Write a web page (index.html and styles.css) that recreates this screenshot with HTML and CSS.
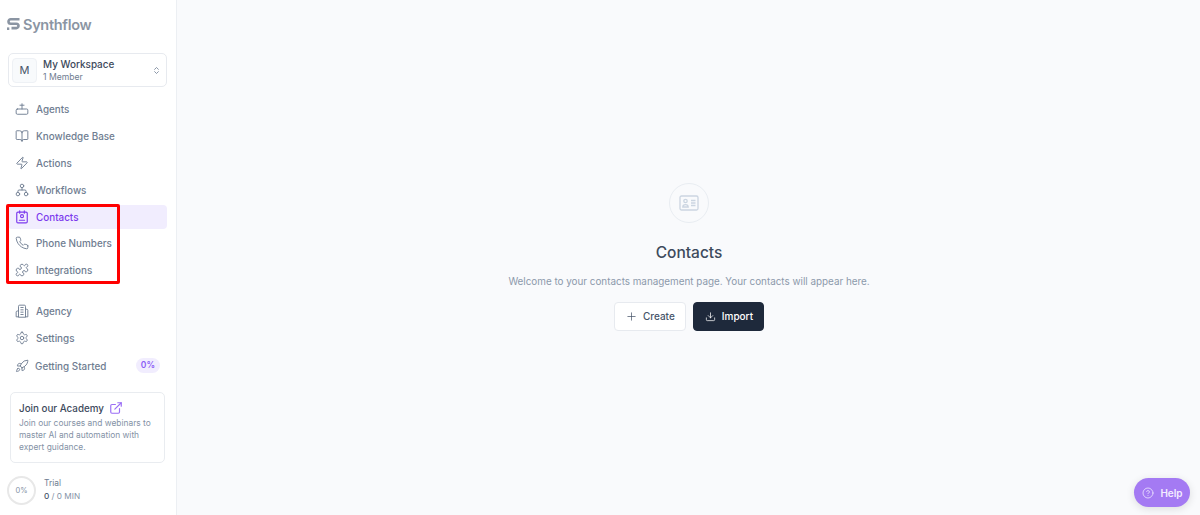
FILE: index.html
```html
<!DOCTYPE html>
<html lang="en">
<head>
    <meta charset="UTF-8">
    <title>Contacts - Synthflow</title>
    <link rel="stylesheet" href="styles.css">
</head>
<body>
    <div class="app">
        <aside class="sidebar">
            <div class="logo">
                <svg class="logo-mark" viewBox="0 0 13 12" fill="none" stroke="#8b95a3" stroke-width="2.600"><path d="M12.500 1.300H3.700a2.200 2.200 0 0 0 0 4.400h5.600a2.200 2.200 0 0 1 0 4.400H4.500"/><path d="M0 10.700h2.300"/></svg>
                <span>Synthflow</span>
            </div>

            <div class="workspace">
                <div class="ws-avatar">M</div>
                <div class="ws-text">
                    <div class="ws-name">My Workspace</div>
                    <div class="ws-sub">1 Member</div>
                </div>
                <svg class="ws-caret" viewBox="0 0 24 24" fill="none" stroke="#64748b" stroke-width="2" stroke-linecap="round" stroke-linejoin="round"><path d="m7 15 5 5 5-5"/><path d="m7 9 5-5 5 5"/></svg>
            </div>

            <nav class="nav">
                <a class="nav-item">
                    <svg class="icon" viewBox="0 0 24 24"><rect x="2" y="12" width="20" height="9" rx="2"/><path d="M12 12V3"/><path d="M8.500 5.500h7"/></svg>
                    Agents
                </a>
                <a class="nav-item">
                    <svg class="icon" viewBox="0 0 24 24"><path d="M12 7v14"/><path d="M3 18a1 1 0 0 1-1-1V4a1 1 0 0 1 1-1h5a4 4 0 0 1 4 4 4 4 0 0 1 4-4h5a1 1 0 0 1 1 1v13a1 1 0 0 1-1 1h-6a3 3 0 0 0-3 3 3 3 0 0 0-3-3z"/></svg>
                    Knowledge Base
                </a>
                <a class="nav-item">
                    <svg class="icon" viewBox="0 0 24 24"><path d="M4 14a1 1 0 0 1-.78-1.630l9.900-10.200a.5.5 0 0 1 .86.460l-1.920 6.020A1 1 0 0 0 13 10h7a1 1 0 0 1 .78 1.630l-9.900 10.200a.5.5 0 0 1-.86-.460l1.920-6.020A1 1 0 0 0 11 14z"/></svg>
                    Actions
                </a>
                <a class="nav-item">
                    <svg class="icon" viewBox="0 0 24 24"><circle cx="12" cy="5" r="3"/><circle cx="5" cy="19" r="3"/><circle cx="19" cy="19" r="3"/><path d="M5 16v-2a2 2 0 0 1 2-2h10a2 2 0 0 1 2 2v2"/><path d="M12 8v4"/></svg>
                    Workflows
                </a>
                <a class="nav-item active">
                    <svg class="icon icon-strong" viewBox="0 0 24 24"><path d="M16 1.500v4"/><path d="M8 1.500v4"/><rect x="3" y="3.500" width="18" height="18.500" rx="2"/><circle cx="12" cy="10.500" r="2.500"/><path d="M7.500 17.500h9"/></svg>
                    Contacts
                </a>
                <a class="nav-item">
                    <svg class="icon" viewBox="0 0 24 24"><path d="M22 16.900v3a2 2 0 0 1-2.200 2 19.800 19.800 0 0 1-8.600-3.100 19.500 19.500 0 0 1-6-6A19.800 19.800 0 0 1 2.100 4.200 2 2 0 0 1 4.100 2h3a2 2 0 0 1 2 1.700c.1 1 .4 1.900.7 2.800a2 2 0 0 1-.5 2.100L8.100 9.900a16 16 0 0 0 6 6l1.300-1.300a2 2 0 0 1 2.100-.4c.9.3 1.800.6 2.800.7a2 2 0 0 1 1.700 2z"/></svg>
                    Phone Numbers
                </a>
                <a class="nav-item">
                    <svg class="icon" viewBox="0 0 24 24"><path d="M15.390 4.390a1 1 0 0 0 1.680-.474 2.500 2.500 0 1 1 3.014 3.015 1 1 0 0 0-.474 1.680l1.683 1.682a2.414 2.414 0 0 1 0 3.414L19.610 15.390a1 1 0 0 1-1.680-.474 2.500 2.500 0 1 0-3.014 3.015 1 1 0 0 1 .474 1.680l-1.683 1.682a2.414 2.414 0 0 1-3.414 0L8.610 19.610a1 1 0 0 0-1.680.474 2.500 2.500 0 1 1-3.014-3.015 1 1 0 0 0 .474-1.680l-1.683-1.682a2.414 2.414 0 0 1 0-3.414L4.390 8.610a1 1 0 0 1 1.680.474 2.500 2.500 0 1 0 3.014-3.015 1 1 0 0 1-.474-1.680l1.683-1.682a2.414 2.414 0 0 1 3.414 0z"/></svg>
                    Integrations
                </a>
            </nav>

            <nav class="nav nav-second">
                <a class="nav-item">
                    <svg class="icon" viewBox="0 0 24 24"><path d="M6 22V4a2 2 0 0 1 2-2h8a2 2 0 0 1 2 2v18z"/><path d="M6 12H4a2 2 0 0 0-2 2v8h4"/><path d="M18 9h2a2 2 0 0 1 2 2v11h-4"/><path d="M10 6h4"/><path d="M10 10h4"/><path d="M10 14h4"/><path d="M10 18h4"/></svg>
                    Agency
                </a>
                <a class="nav-item">
                    <svg class="icon" viewBox="0 0 24 24"><path d="M12.200 2h-.4a2 2 0 0 0-2 2v.2a2 2 0 0 1-1 1.700l-.4.300a2 2 0 0 1-2 0l-.2-.1a2 2 0 0 0-2.700.7l-.2.400a2 2 0 0 0 .7 2.700l.2.100a2 2 0 0 1 1 1.700v.500a2 2 0 0 1-1 1.700l-.2.100a2 2 0 0 0-.7 2.700l.2.400a2 2 0 0 0 2.700.7l.2-.1a2 2 0 0 1 2 0l.4.300a2 2 0 0 1 1 1.700v.2a2 2 0 0 0 2 2h.4a2 2 0 0 0 2-2v-.2a2 2 0 0 1 1-1.700l.4-.3a2 2 0 0 1 2 0l.2.100a2 2 0 0 0 2.700-.7l.2-.4a2 2 0 0 0-.7-2.700l-.2-.1a2 2 0 0 1-1-1.700v-.5a2 2 0 0 1 1-1.700l.2-.1a2 2 0 0 0 .7-2.700l-.2-.4a2 2 0 0 0-2.700-.7l-.2.100a2 2 0 0 1-2 0l-.4-.3a2 2 0 0 1-1-1.700V4a2 2 0 0 0-2-2z"/><circle cx="12" cy="12" r="3"/></svg>
                    Settings
                </a>
                <a class="nav-item nav-start">
                    <svg class="icon" viewBox="0 0 24 24"><path d="M4.500 16.500c-1.500 1.300-2 5-2 5s3.700-.5 5-2c.7-.8.700-2.100-.1-2.900a2.200 2.200 0 0 0-2.900-.1z"/><path d="m12 15-3-3a22 22 0 0 1 2-4A12.900 12.900 0 0 1 22 2c0 2.700-.8 7.500-6 11a22 22 0 0 1-4 2z"/><path d="M9 12H4s.6-3 2-4c1.600-1.100 5 0 5 0"/><path d="M12 15v5s3-.6 4-2c1.100-1.600 0-5 0-5"/></svg>
                    <span class="nav-grow">Getting Started</span>
                    <span class="badge">0%</span>
                </a>
            </nav>

            <div class="academy">
                <div class="academy-title">
                    Join our Academy
                    <svg class="academy-link" viewBox="0 0 24 24"><path d="M15 3h6v6"/><path d="M10 14 21 3"/><path d="M18 13v6a2 2 0 0 1-2 2H5a2 2 0 0 1-2-2V8a2 2 0 0 1 2-2h6"/></svg>
                </div>
                <p class="academy-text">Join our courses and webinars to master AI and automation with expert guidance.</p>
            </div>

            <div class="trial">
                <div class="trial-ring">0%</div>
                <div>
                    <div class="trial-label">Trial</div>
                    <div class="trial-mins"><b>0</b> / 0 MIN</div>
                </div>
            </div>
        </aside>

        <main class="main">
            <div class="empty">
                <div class="empty-icon">
                    <svg viewBox="0 0 20 16" fill="none" stroke="#cbd5e1" stroke-width="1.300"><rect x="1" y="1" width="18" height="14" rx="1.500"/><circle cx="6.500" cy="6" r="1.700"/><path d="M3.800 12c0-1.700 1.200-2.300 2.700-2.300s2.700.6 2.700 2.300z"/><path d="M12 5.500h4.500M12 8h4.500M12 10.500h4.500"/></svg>
                </div>
                <h1 class="empty-title">Contacts</h1>
                <p class="empty-text">Welcome to your contacts management page. Your contacts will appear here.</p>
                <div class="empty-actions">
                    <button class="btn btn-light">
                        <svg class="btn-icon" viewBox="0 0 24 24"><path d="M4 12h16"/><path d="M12 4v16"/></svg>
                        Create
                    </button>
                    <button class="btn btn-dark">
                        <svg class="btn-icon" viewBox="0 0 24 24"><path d="M12 4v11"/><path d="m7 10 5 5 5-5"/><path d="M21 15v4a2 2 0 0 1-2 2H5a2 2 0 0 1-2-2v-4"/></svg>
                        Import
                    </button>
                </div>
            </div>
        </main>
    </div>

    <div class="highlight"></div>

    <button class="help">
        <svg class="help-icon" viewBox="0 0 24 24"><circle cx="12" cy="12" r="10"/><path d="M9.100 9a3 3 0 0 1 5.800 1c0 2-3 3-3 3"/><path d="M12 17h.01"/></svg>
        Help
    </button>
</body>
</html>
```

FILE: styles.css
```css
* { box-sizing: border-box; }
html, body { height: 100%; }
body { margin: 0; font-family: Inter, "Liberation Sans", sans-serif; color: #334155; overflow: hidden; }
p { margin: 0; }

.app { display: flex; height: 515px; }

.sidebar { width: 177px; flex-shrink: 0; background: #fff; border-right: 1px solid #eceff3; padding: 16px 9px 0 8px; }

.logo { display: flex; align-items: center; gap: 3px; height: 16px; margin-left: -1px; font-size: 14.500px; font-weight: 600; letter-spacing: -0.3px; color: #8b95a3; }
.logo-mark { width: 13px; height: 12px; }

.workspace { display: flex; align-items: center; height: 34px; margin-top: 21px; padding: 0 5px 0 3px; border: 1px solid #e7eaef; border-radius: 5px; }
.ws-avatar { width: 25px; height: 25px; display: flex; align-items: center; justify-content: center; background: #f8fafc; border: 1px solid #eef1f5; border-radius: 4px; font-size: 11px; color: #475569; }
.ws-text { flex: 1; margin-left: 6px; }
.ws-name { font-size: 9.950px; font-weight: 500; line-height: 13px; color: #3d4a5c; }
.ws-sub { font-size: 8.600px; line-height: 12px; color: #6f7d91; }
.ws-caret { width: 9px; height: 11px; }

.nav { display: flex; flex-direction: column; gap: 2.800px; margin-top: 10.400px; }
.nav-second { margin-top: 16.800px; }
.nav-item { display: flex; align-items: center; gap: 7px; height: 24px; padding: 0 7px; border-radius: 4px; font-size: 9.900px; font-weight: 500; color: #6f7d91; }
.nav-item.active { background: #f1edfe; color: #7c3aed; }
.nav-start { gap: 6px; margin-top: 1px; }
.nav-grow { flex: 1; }
.icon { width: 14px; height: 14px; flex-shrink: 0; fill: none; stroke: currentColor; stroke-width: 1.600; stroke-linecap: round; stroke-linejoin: round; }
.icon-strong { stroke-width: 2; }

.badge { padding: 2px 5px; border-radius: 8px; background: #f1edfe; color: #8b5cf6; font-size: 8.500px; font-weight: 600; line-height: 11px; }

.academy { width: 155px; height: 71px; margin: 14.400px 0 0 2px; padding: 9px 8px; border: 1px solid #e9ecf0; border-radius: 5px; }
.academy-title { display: flex; align-items: center; gap: 5px; font-size: 9.800px; font-weight: 500; line-height: 13px; color: #3d4a5c; }
.academy-link { width: 14px; height: 14px; margin: -1px 0; fill: none; stroke: #9b6ef5; stroke-width: 2; stroke-linecap: round; stroke-linejoin: round; }
.academy-text { margin-top: 2px; font-size: 8.400px; line-height: 12px; color: #8492a6; }

.trial { display: flex; align-items: center; gap: 8px; margin: 13px 0 0 -1px; }
.trial-ring { width: 29px; height: 29px; display: flex; align-items: center; justify-content: center; border: 2px solid #e8e8e8; border-radius: 50%; font-size: 7.500px; color: #8492a6; }
.trial-label { font-size: 8.400px; line-height: 13px; color: #6f7d91; }
.trial-mins { font-size: 8.200px; line-height: 13px; color: #8492a6; }
.trial-mins b { font-weight: 500; color: #475569; }

.main { flex: 1; display: flex; justify-content: center; padding-left: 1px; background: #f9fafc; }
.empty { display: flex; flex-direction: column; align-items: center; padding-top: 183px; }
.empty-icon { width: 40px; height: 40px; display: flex; align-items: center; justify-content: center; border: 1px solid #e9edf2; border-radius: 50%; }
.empty-icon svg { width: 20px; height: 16px; }
.empty-title { margin: 20px 0 0; font-size: 15.500px; font-weight: 500; line-height: 20px; color: #3d4a5c; }
.empty-text { margin-top: 11px; font-size: 9.870px; line-height: 14px; color: #8c99ab; }
.empty-actions { display: flex; gap: 7px; margin-top: 14px; }

.btn { display: flex; align-items: center; gap: 6px; height: 29px; padding: 0 10px 1px 11px; border-radius: 4px; font-family: inherit; font-size: 10px; font-weight: 500; }
.btn-light { background: #fff; border: 1px solid #e7eaef; color: #475569; }
.btn-dark { background: #1e293b; border: 1px solid #1e293b; color: #fff; }
.btn-icon { width: 11px; height: 11px; fill: none; stroke: currentColor; stroke-width: 1.600; stroke-linecap: round; stroke-linejoin: round; }

.highlight { position: absolute; left: 6px; top: 204px; width: 114px; height: 80px; border: 3px solid #f00; border-radius: 2px; }

.help { position: absolute; left: 1134px; top: 478px; width: 56px; height: 29px; display: flex; align-items: center; justify-content: center; gap: 6px; padding-left: 7px; border: 0; border-radius: 14.500px; background: #a47af3; box-shadow: 0 2px 8px rgba(0,0,0,.12); color: #f3edff; font-family: inherit; font-size: 10px; font-weight: 600; }
.help-icon { width: 12px; height: 12px; fill: none; stroke: currentColor; stroke-width: 1.500; stroke-linecap: round; stroke-linejoin: round; }
```
